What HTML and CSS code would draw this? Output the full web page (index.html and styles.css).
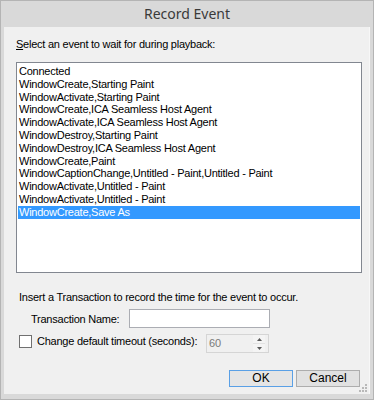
FILE: index.html
```html
<!DOCTYPE html>
<html>
<head>
<meta charset="utf-8">
<link rel="stylesheet" href="styles.css">
</head>
<body>
<div class="window">
  <div class="titlebar">Record Event</div>
  <div class="client">
    <div class="prompt"><u>S</u>elect an event to wait for during playback:</div>
    <div class="listbox">
      <div class="item">Connected</div>
      <div class="item">WindowCreate,Starting Paint</div>
      <div class="item">WindowActivate,Starting Paint</div>
      <div class="item">WindowCreate,ICA Seamless Host Agent</div>
      <div class="item">WindowActivate,ICA Seamless Host Agent</div>
      <div class="item">WindowDestroy,Starting Paint</div>
      <div class="item">WindowDestroy,ICA Seamless Host Agent</div>
      <div class="item">WindowCreate,Paint</div>
      <div class="item">WindowCaptionChange,Untitled - Paint,Untitled - Paint</div>
      <div class="item">WindowActivate,Untitled - Paint</div>
      <div class="item">WindowActivate,Untitled - Paint</div>
      <div class="item selected">WindowCreate,Save As</div>
    </div>
    <div class="hint">Insert a Transaction to record the time for the event to occur.</div>
    <div class="txn-row">
      <span class="txn-label">Transaction Name:</span>
      <span class="textbox"></span>
    </div>
    <div class="timeout-row">
      <span class="checkbox"></span>
      <span class="timeout-label">Change default timeout (seconds):</span>
      <span class="spin">
        <span class="spin-value">60</span>
        <span class="spin-buttons">
          <span class="spin-btn"><svg width="5" height="3" viewBox="0 0 5 3"><path d="M0 3 L2.5 0 L5 3 Z" fill="#5a5a5a"/></svg></span>
          <span class="spin-btn"><svg width="5" height="3" viewBox="0 0 5 3"><path d="M0 0 L5 0 L2.5 3 Z" fill="#5a5a5a"/></svg></span>
        </span>
      </span>
    </div>
    <div class="button-row">
      <span class="button default">OK</span>
      <span class="button">Cancel</span>
    </div>
    <svg class="grip" width="8" height="8" viewBox="0 0 8 8">
      <rect x="6" y="0" width="2" height="2" fill="#b8b8b8"/>
      <rect x="3" y="3" width="2" height="2" fill="#b8b8b8"/>
      <rect x="6" y="3" width="2" height="2" fill="#b8b8b8"/>
      <rect x="0" y="6" width="2" height="2" fill="#b8b8b8"/>
      <rect x="3" y="6" width="2" height="2" fill="#b8b8b8"/>
      <rect x="6" y="6" width="2" height="2" fill="#b8b8b8"/>
    </svg>
  </div>
</div>
</body>
</html>
```
FILE: styles.css
```css
html, body {
  margin: 0;
  padding: 0;
  background: #ffffff;
}
.window {
  width: 374px;
  height: 400px;
  box-sizing: border-box;
  background: #d9d9d9;
  border: 1px solid #b4b4b4;
  padding: 0 3px 5px 3px;
  display: flex;
  flex-direction: column;
  font-family: "Liberation Sans", Arial, sans-serif;
  font-size: 11px;
  color: #000;
}
.titlebar {
  height: 26px;
  line-height: 26px;
  text-align: center;
  font-family: "Noto Sans", "Open Sans", sans-serif;
  font-size: 14px;
  color: #3a3a3a;
  flex: none;
}
.client {
  position: relative;
  flex: 1;
  background: #f0f0f0;
  border-right: 1px solid #f7f7f7;
  padding: 0 7px 0 12px;
  display: flex;
  flex-direction: column;
  letter-spacing: -0.24px;
}
.prompt {
  margin-top: 11px;
  line-height: 13px;
}
.listbox {
  margin-top: 11px;
  height: 211px;
  box-sizing: border-box;
  border: 1px solid #828790;
  background: #ffffff;
  padding: 2px 1px;
}
.item {
  height: 12.8px;
  line-height: 12.8px;
  padding-left: 1px;
  white-space: nowrap;
}
.item.selected {
  background: #3399ff;
  color: #ffffff;
}
.hint {
  margin-top: 18px;
  margin-left: 3px;
  line-height: 13px;
}
.txn-row {
  margin-top: 5px;
  display: flex;
  align-items: center;
}
.txn-label {
  width: 98px;
  margin-left: 15px;
  flex: none;
}
.textbox {
  width: 141px;
  height: 19px;
  box-sizing: border-box;
  border: 1px solid #abadb3;
  background: #ffffff;
}
.timeout-row {
  margin-top: 6px;
  display: flex;
  align-items: flex-start;
}
.checkbox {
  width: 13px;
  height: 13px;
  box-sizing: border-box;
  margin: 1px 0 0 3px;
  border: 1px solid #707070;
  background: #ffffff;
  flex: none;
}
.timeout-label {
  margin-left: 5px;
  margin-top: 1px;
  width: 169px;
  flex: none;
  line-height: 13px;
}
.spin {
  width: 63px;
  height: 19px;
  box-sizing: border-box;
  border: 1px solid #d5d5d5;
  background: #f0f0f0;
  display: flex;
  align-items: stretch;
}
.spin-value {
  flex: 1;
  color: #7a7a7a;
  line-height: 16px;
  padding-left: 2px;
}
.spin-buttons {
  width: 12px;
  margin: 0 3px 0 0;
  display: flex;
  flex-direction: column;
}
.spin-btn {
  flex: 1;
  display: flex;
  align-items: center;
  justify-content: center;
  background: #f4f4f4;
}
.spin-btn + .spin-btn {
  border-top: 1px solid #e2e2e2;
}
.button-row {
  margin-top: 17px;
  margin-right: 2px;
  display: flex;
  justify-content: flex-end;
  gap: 3px;
}
.button {
  width: 64px;
  height: 17px;
  box-sizing: border-box;
  border: 1px solid #adadad;
  background: #e1e1e1;
  text-align: center;
  line-height: 15px;
  font-size: 12px;
  letter-spacing: 0;
}
.button.default {
  border-color: #5aa0e6;
  background: #e5e5e5;
}
.grip {
  position: absolute;
  right: 2px;
  bottom: 2px;
}
```
